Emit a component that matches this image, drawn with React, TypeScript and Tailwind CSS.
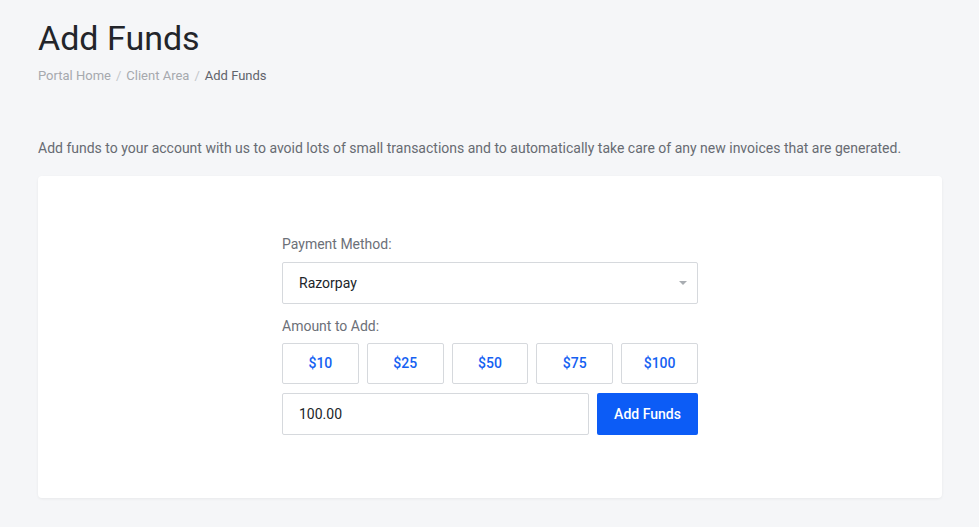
export default function App() {
  const amounts = ["$10", "$25", "$50", "$75", "$100"];

  return (
    <div className="min-h-[527px] bg-[#f5f6f8] px-[38px] pt-[17px] font-['Roboto',sans-serif] text-[#212529]">
      {/* Header */}
      <h1 className="text-[34px] leading-[42px] font-normal text-[#23252a]">Add Funds</h1>
      <nav className="mt-[7px] flex items-center text-[13px] leading-[20px]">
        <span className="text-[#a6a9ae]">Portal Home</span>
        <span className="px-[5px] text-[#c3c6ca]">/</span>
        <span className="text-[#a6a9ae]">Client Area</span>
        <span className="px-[5px] text-[#c3c6ca]">/</span>
        <span className="text-[#5f636b]">Add Funds</span>
      </nav>

      <p className="mt-[52px] text-[14px] leading-[21px] text-[#676b72]">
        Add funds to your account with us to avoid lots of small transactions and to automatically take care of any new invoices that are generated.
      </p>

      {/* Card */}
      <div className="mt-[17px] h-[322px] w-[904px] rounded-[4px] bg-white pt-[58px] shadow-[0_1px_3px_rgba(0,0,0,0.06)]">
        <form className="mx-auto w-[416px]">
          <label className="block text-[14px] leading-[21px] text-[#6c7078]">Payment Method:</label>
          <div className="relative mt-[7px]">
            <select
              defaultValue="razorpay"
              className="h-[42px] w-full appearance-none rounded-[2px] border border-[#d6d9dd] bg-white pl-[16px] text-[14px] text-[#212529] outline-none"
            >
              <option value="razorpay">Razorpay</option>
            </select>
            <span className="pointer-events-none absolute right-[11px] top-[19px] h-0 w-0 border-x-[4px] border-t-[4px] border-x-transparent border-t-[#a9adb2]" />
          </div>

          <label className="mt-[12px] block text-[14px] leading-[21px] text-[#6c7078]">Amount to Add:</label>
          <div className="mt-[6px] grid grid-cols-5 gap-2">
            {amounts.map((a) => (
              <button
                key={a}
                type="button"
                className="h-[41px] rounded-[2px] border border-[#d6d9dd] bg-white text-[14px] font-medium text-[#1561f2]"
              >
                {a}
              </button>
            ))}
          </div>

          <div className="mt-[9px] flex gap-2">
            <input
              defaultValue="100.00"
              className="h-[42px] w-[307px] rounded-[2px] border border-[#d6d9dd] bg-white pl-[16px] text-[14px] text-[#212529] outline-none"
            />
            <button
              type="button"
              className="h-[42px] flex-1 rounded-[2px] bg-[#0c5cf6] text-[14px] font-medium text-white"
            >
              Add Funds
            </button>
          </div>
        </form>
      </div>
    </div>
  );
}
